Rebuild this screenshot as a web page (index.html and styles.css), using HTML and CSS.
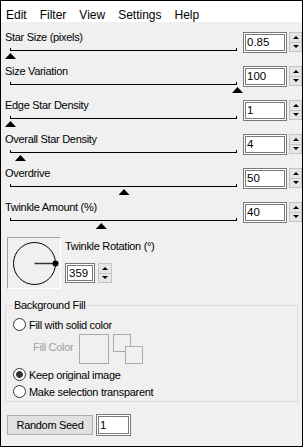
FILE: index.html
```html
<!DOCTYPE html>
<html lang="en">
<head>
    <meta charset="UTF-8">
    <title>Twinkle</title>
    <link rel="stylesheet" href="styles.css">
</head>
<body>
    <div class="window">
        <!-- Menu -->
        <ul class="menubar">
            <li>Edit</li>
            <li>Filter</li>
            <li>View</li>
            <li>Settings</li>
            <li>Help</li>
        </ul>

        <div class="panel">
            <div class="row">
                <div class="slider">
                    <div class="label">Star Size (pixels)</div>
                    <div class="track"><div class="rail"></div><span class="thumb" style="left: 0%"></span></div>
                </div>
                <div class="spin">
                    <div class="num">0.85</div>
                    <div class="spin-btns"><span class="up"></span><span class="down"></span></div>
                </div>
            </div>

            <div class="row">
                <div class="slider">
                    <div class="label">Size Variation</div>
                    <div class="track"><div class="rail"></div><span class="thumb" style="left: 100%"></span></div>
                </div>
                <div class="spin">
                    <div class="num">100</div>
                    <div class="spin-btns"><span class="up"></span><span class="down"></span></div>
                </div>
            </div>

            <div class="row">
                <div class="slider">
                    <div class="label">Edge Star Density</div>
                    <div class="track"><div class="rail"></div><span class="thumb" style="left: 0%"></span></div>
                </div>
                <div class="spin">
                    <div class="num">1</div>
                    <div class="spin-btns"><span class="up"></span><span class="down"></span></div>
                </div>
            </div>

            <div class="row">
                <div class="slider">
                    <div class="label">Overall Star Density</div>
                    <div class="track"><div class="rail"></div><span class="thumb" style="left: 4.4%"></span></div>
                </div>
                <div class="spin">
                    <div class="num">4</div>
                    <div class="spin-btns"><span class="up"></span><span class="down"></span></div>
                </div>
            </div>

            <div class="row">
                <div class="slider">
                    <div class="label">Overdrive</div>
                    <div class="track"><div class="rail"></div><span class="thumb" style="left: 50%"></span></div>
                </div>
                <div class="spin">
                    <div class="num">50</div>
                    <div class="spin-btns"><span class="up"></span><span class="down"></span></div>
                </div>
            </div>

            <div class="row">
                <div class="slider">
                    <div class="label">Twinkle Amount (%)</div>
                    <div class="track"><div class="rail"></div><span class="thumb" style="left: 40%"></span></div>
                </div>
                <div class="spin">
                    <div class="num">40</div>
                    <div class="spin-btns"><span class="up"></span><span class="down"></span></div>
                </div>
            </div>

            <!-- Rotation dial -->
            <div class="rotation">
                <div class="dial">
                    <svg width="52" height="50" viewBox="0 0 52 50">
                        <circle cx="26.5" cy="25.5" r="21" fill="none" stroke="#000" stroke-width="1"/>
                        <line x1="26.5" y1="25.5" x2="47.5" y2="25.5" stroke="#333" stroke-width="1.5"/>
                        <circle cx="47.5" cy="25.5" r="3" fill="#000"/>
                    </svg>
                </div>
                <div class="rot-side">
                    <div class="label">Twinkle Rotation (°)</div>
                    <div class="spin spin-small">
                        <div class="num">359</div>
                        <div class="spin-btns"><span class="up"></span><span class="down"></span></div>
                    </div>
                </div>
            </div>

            <!-- Background fill -->
            <fieldset class="group">
                <legend>Background Fill</legend>
                <div class="radio-row first">
                    <span class="radio"></span>
                    <span>Fill with solid color</span>
                </div>
                <div class="fill-row">
                    <span class="fill-label">Fill Color</span>
                    <span class="swatch"></span>
                    <svg class="swap" width="31" height="30" viewBox="0 0 31 30">
                        <rect x="0.5" y="0.5" width="17" height="17" fill="none" stroke="#ababab"/>
                        <rect x="12.5" y="12.5" width="17" height="17" fill="#f0f0f0" stroke="#ababab"/>
                    </svg>
                </div>
                <div class="radio-row">
                    <span class="radio checked"></span>
                    <span>Keep original image</span>
                </div>
                <div class="radio-row">
                    <span class="radio"></span>
                    <span>Make selection transparent</span>
                </div>
            </fieldset>

            <div class="seed-row">
                <div class="seed-btn">Random Seed</div>
                <div class="num seed-num">1</div>
            </div>
        </div>
    </div>
</body>
</html>
```
FILE: styles.css
```css
* {
    margin: 0;
    padding: 0;
    box-sizing: border-box;
}

body {
    font-family: "Liberation Sans", Arial, sans-serif;
    font-size: 11px;
    letter-spacing: -0.3px;
    color: #000;
    background: #f0f0f0;
}

/* Window frame */
.window {
    width: 303px;
    height: 447px;
    border: 1px solid #000;
    background: #f0f0f0;
    overflow: hidden;
}

/* Menu bar */
.menubar {
    list-style: none;
    display: flex;
    gap: 13px;
    height: 21px;
    padding: 7px 0 0 5px;
    background: #fff;
    font-size: 12px;
    line-height: 14px;
    letter-spacing: 0;
}

/* Main panel */
.panel {
    padding: 8px 0 0 4px;
}

.label {
    height: 15px;
    line-height: 15px;
    white-space: nowrap;
}

.row {
    display: flex;
    height: 34px;
}

.slider {
    width: 238px;
}

.track {
    position: relative;
    width: 227px;
    height: 19px;
    margin-left: 5px;
}

.rail {
    height: 3px;
    margin-top: 3px;
    border: 1px solid #000;
    border-top: none;
}

.thumb {
    position: absolute;
    top: 5px;
    width: 11px;
    height: 6px;
    margin-left: -5px;
    background: #000;
    clip-path: polygon(50% 0, 100% 100%, 0 100%);
}

/* Spin box */
.spin {
    display: flex;
    margin-top: 2px;
}

.num {
    width: 44px;
    height: 21px;
    border: 3px double #7a7a7a;
    background: #fff;
    padding-left: 1px;
    font-size: 11.5px;
    line-height: 15px;
    letter-spacing: 0;
}

.spin-btns {
    display: flex;
    flex-direction: column;
    width: 13px;
    height: 20px;
    margin-left: 2px;
}

.spin-btns span {
    flex: 1;
    display: flex;
    align-items: center;
    justify-content: center;
    background: #e6e6e6;
    border: 1px solid #c4c4c4;
}

.spin-btns span + span {
    border-top: none;
}

.spin-btns .up::after,
.spin-btns .down::after {
    content: "";
    border-left: 3px solid transparent;
    border-right: 3px solid transparent;
}

.spin-btns .up::after {
    border-bottom: 3px solid #000;
}

.spin-btns .down::after {
    border-top: 3px solid #000;
}

/* Rotation */
.rotation {
    display: flex;
    gap: 4px;
    margin: 3px 0 0 2px;
}

.dial {
    width: 54px;
    height: 52px;
    border: 1px solid;
    border-color: #a0a0a0 #fff #fff #a0a0a0;
}

.dial svg {
    display: block;
}

.rot-side {
    padding-top: 2px;
}

.spin-small {
    margin-top: 9px;
}

.spin-small .num {
    width: 30px;
    height: 20px;
    line-height: 14px;
}

.spin-small .spin-btns {
    margin-left: 3px;
    width: 14px;
}

/* Group box */
.group {
    margin: 9px 4px 0 0;
    border: 1px solid #dcdcdc;
    padding: 0 0 1px 0;
    min-width: 0;
}

.group legend {
    margin-left: 6px;
    padding: 0 2px;
    line-height: 15px;
}

.radio-row {
    display: flex;
    align-items: center;
    gap: 3px;
    height: 17px;
    margin-left: 7px;
}

.radio-row.first {
    margin-top: 3px;
}

.radio {
    width: 13px;
    height: 13px;
    border: 1px solid #333;
    border-radius: 50%;
    background: #fff;
}

.radio.checked {
    background: radial-gradient(circle, #333 3px, #fff 3.8px);
}

.fill-row {
    display: flex;
    align-items: flex-start;
    margin: 1px 0 2px 27px;
}

.fill-label {
    margin-top: 6px;
    color: #a0a0a0;
    line-height: 15px;
}

.swatch {
    width: 30px;
    height: 30px;
    margin-left: 6px;
    border: 1px solid #ababab;
}

.swap {
    margin-left: 4px;
}

/* Seed */
.seed-row {
    display: flex;
    align-items: center;
    gap: 3px;
    margin: 12px 0 0 2px;
}

.seed-btn {
    width: 86px;
    height: 20px;
    line-height: 18px;
    text-align: center;
    background: #e1e1e1;
    border: 1px solid #adadad;
}

.seed-num {
    width: 35px;
    height: 22px;
    line-height: 16px;
}
```
